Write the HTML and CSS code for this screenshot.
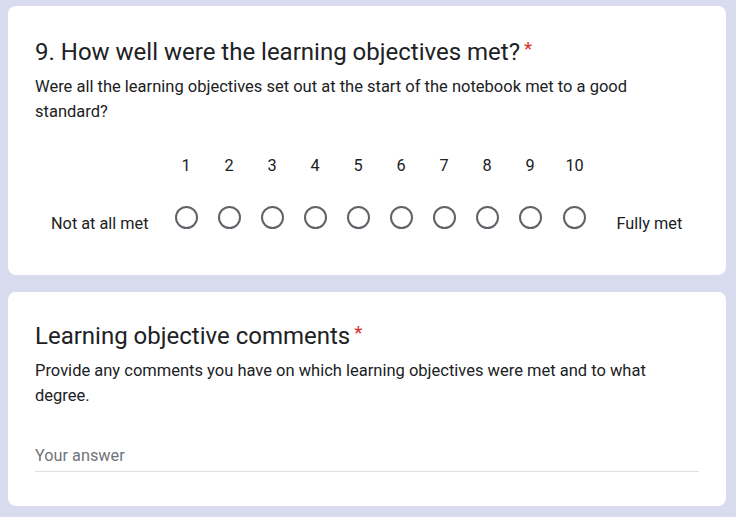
FILE: index.html
```html
<!DOCTYPE html>
<html>
<head>
<meta charset="utf-8">
<link rel="stylesheet" href="styles.css">
</head>
<body>
<div class="page">
  <div class="card">
    <div class="q-title">9. How well were the learning objectives met?<span class="req">*</span></div>
    <div class="q-desc">Were all the learning objectives set out at the start of the notebook met to a good standard?</div>
    <div class="scale">
      <div class="end-label left">Not at all met</div>
      <div class="opt"><div class="num">1</div><div class="radio"></div></div>
      <div class="opt"><div class="num">2</div><div class="radio"></div></div>
      <div class="opt"><div class="num">3</div><div class="radio"></div></div>
      <div class="opt"><div class="num">4</div><div class="radio"></div></div>
      <div class="opt"><div class="num">5</div><div class="radio"></div></div>
      <div class="opt"><div class="num">6</div><div class="radio"></div></div>
      <div class="opt"><div class="num">7</div><div class="radio"></div></div>
      <div class="opt"><div class="num">8</div><div class="radio"></div></div>
      <div class="opt"><div class="num">9</div><div class="radio"></div></div>
      <div class="opt wide"><div class="num">10</div><div class="radio"></div></div>
      <div class="end-label right">Fully met</div>
    </div>
  </div>
  <div class="card card2">
    <div class="q-title">Learning objective comments<span class="req">*</span></div>
    <div class="q-desc">Provide any comments you have on which learning objectives were met and to what degree.</div>
    <div class="answer">Your answer</div>
  </div>
</div>
</body>
</html>
```

FILE: styles.css
```css
html, body {
  margin: 0;
  padding: 0;
  background: #d9dbef;
}
body {
  font-family: Roboto, "Liberation Sans", sans-serif;
  color: #202124;
}
.page {
  display: flex;
  flex-direction: column;
  gap: 17px;
  padding: 6px 10px 0 8px;
}
.card {
  background: #ffffff;
  border-radius: 8px;
  padding: 27px 27px 0 27px;
  height: 269px;
  box-sizing: border-box;
}
.card2 {
  padding-top: 25px;
  height: 214px;
}
.q-title {
  font-size: 24px;
  line-height: 32px;
  font-weight: 400;
}
.req {
  color: #d93025;
  font-size: 19px;
  padding-left: 4px;
  vertical-align: 5px;
}
.q-desc {
  margin-top: 7px;
  font-size: 16.5px;
  line-height: 24.5px;
}
.scale {
  display: flex;
  align-items: flex-start;
  margin-top: 30px;
  font-size: 16.3px;
  line-height: 24px;
}
.end-label {
  padding-top: 58px;
}
.end-label.left {
  padding-left: 16px;
  padding-right: 16px;
}
.end-label.right {
  padding-left: 19px;
}
.opt {
  width: 43px;
  display: flex;
  flex-direction: column;
  align-items: center;
}
.opt.wide {
  width: 46px;
}
.num {
  height: 24px;
}
.radio {
  margin-top: 28px;
  width: 23px;
  height: 23px;
  box-sizing: border-box;
  border: 2px solid #5f6368;
  border-radius: 50%;
}
.answer {
  margin-top: 36px;
  font-size: 16.3px;
  line-height: 24px;
  color: #70757a;
  padding-bottom: 3px;
  border-bottom: 1px solid #e0e0e0;
}
```
